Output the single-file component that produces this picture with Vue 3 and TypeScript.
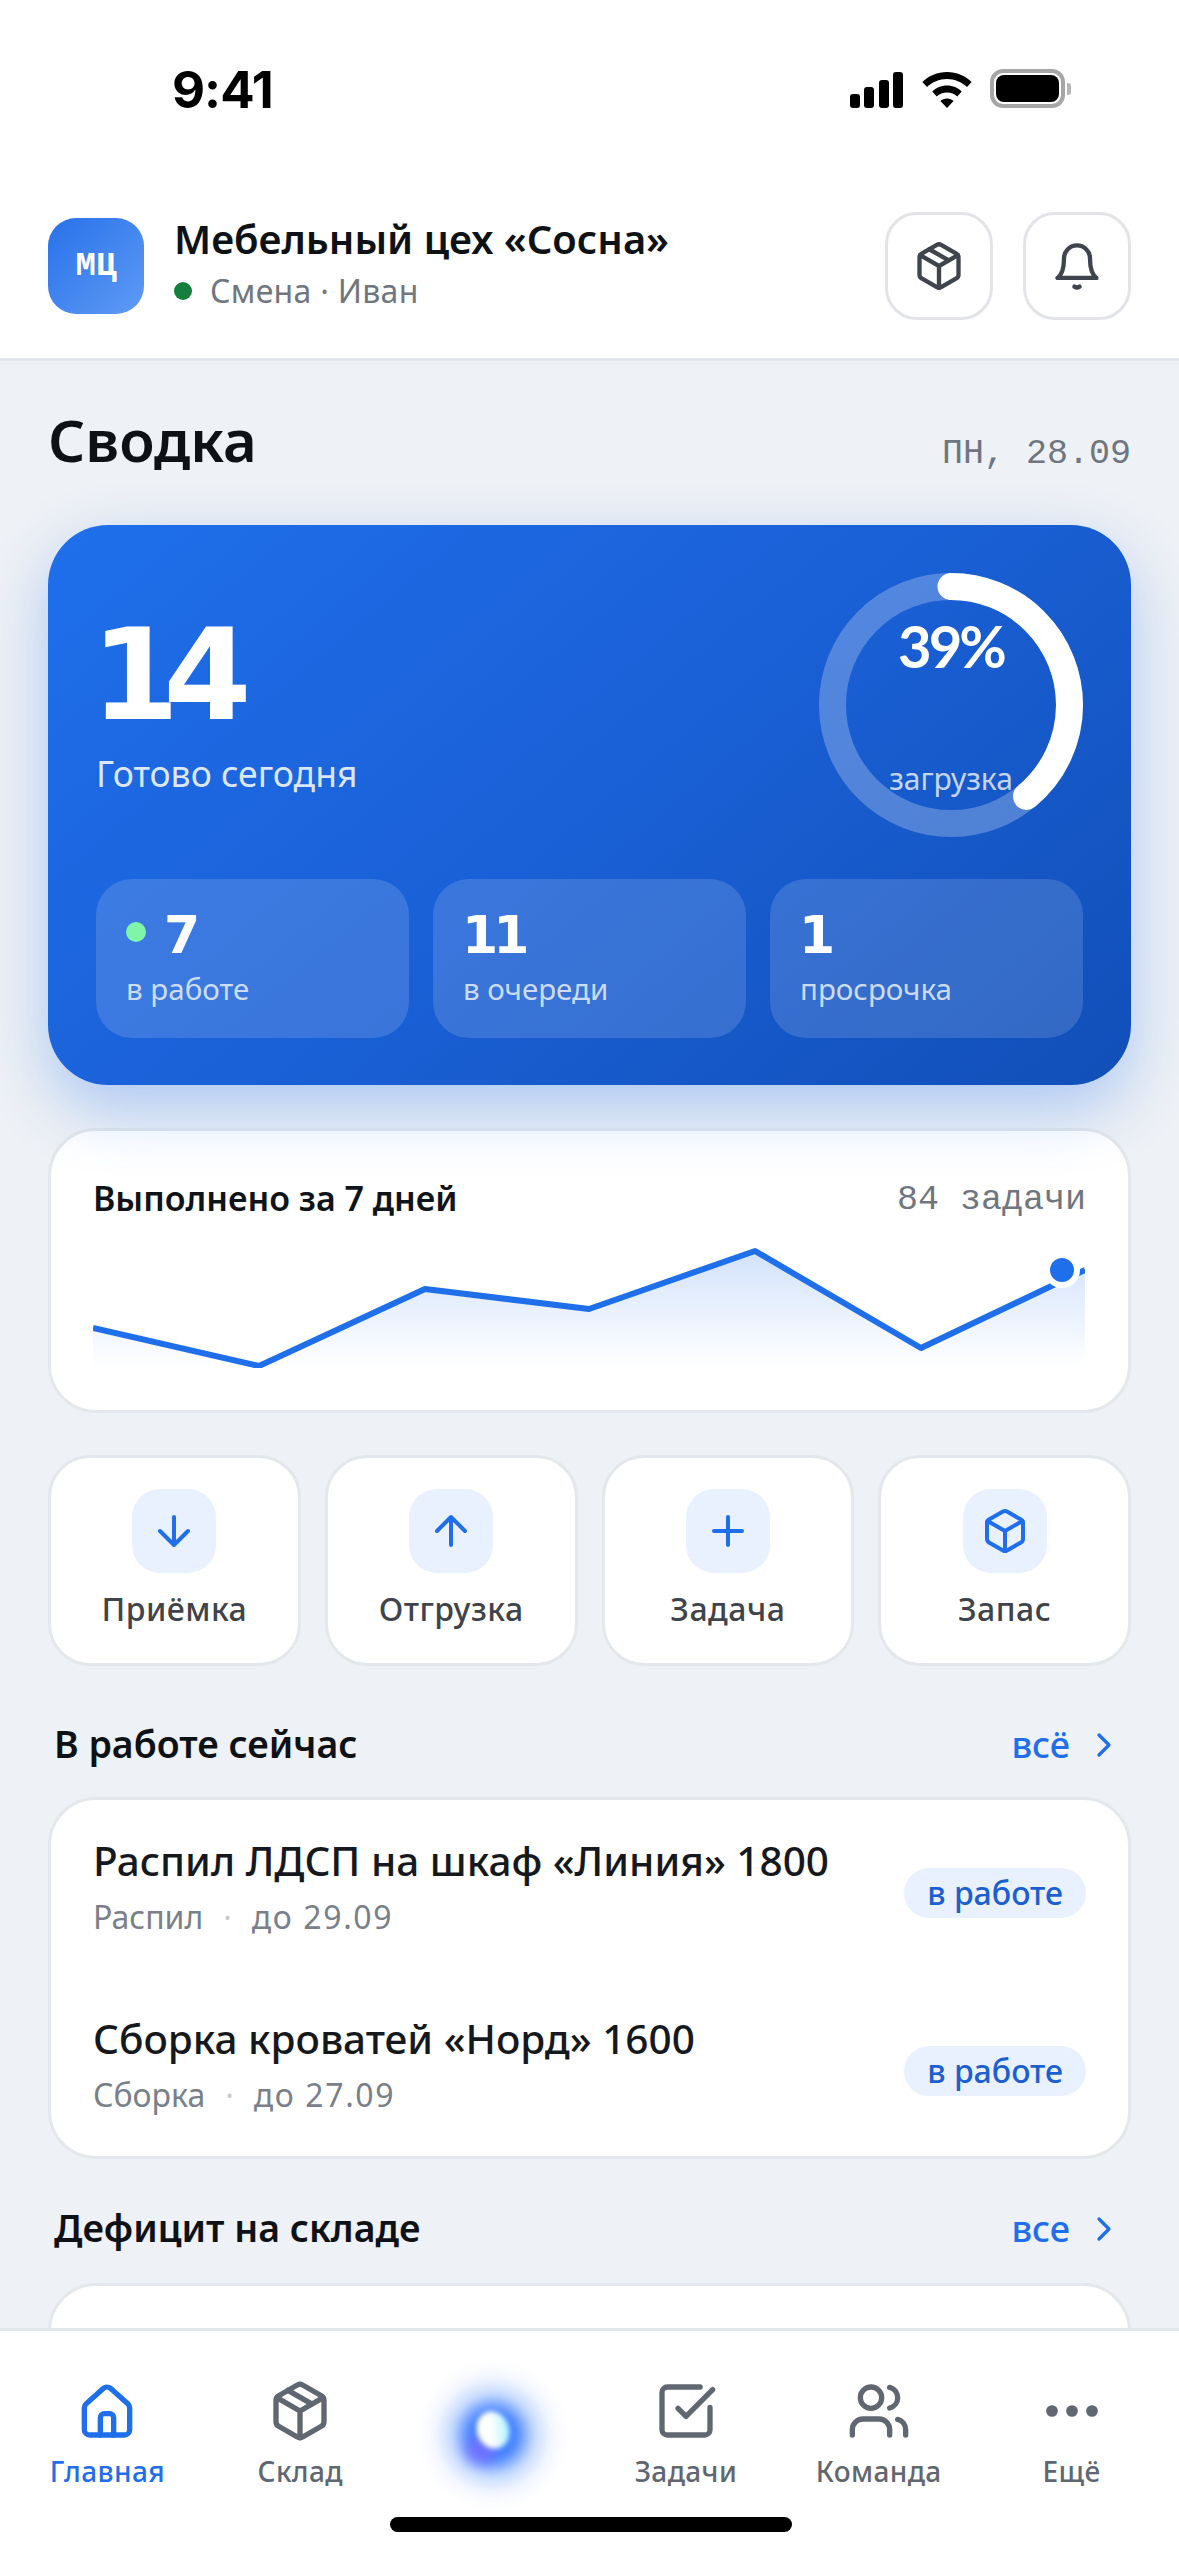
<script setup lang="ts">
interface Stat { value: string; label: string; live?: boolean }
interface Job { title: string; stage: string; due: string }
interface Tab { label: string; icon: string; active?: boolean; orb?: boolean }

const stats: Stat[] = [
  { value: '7', label: 'в работе', live: true },
  { value: '11', label: 'в очереди' },
  { value: '1', label: 'просрочка' },
];

const actions = [
  { label: 'Приёмка', icon: 'down' },
  { label: 'Отгрузка', icon: 'up' },
  { label: 'Задача', icon: 'plus' },
  { label: 'Запас', icon: 'box' },
];

const jobs: Job[] = [
  { title: 'Распил ЛДСП на шкаф «Линия» 1800', stage: 'Распил', due: 'до 29.09' },
  { title: 'Сборка кроватей «Норд» 1600', stage: 'Сборка', due: 'до 27.09' },
];

const tabs: Tab[] = [
  { label: 'Главная', icon: 'home', active: true },
  { label: 'Склад', icon: 'package' },
  { label: '', icon: '', orb: true },
  { label: 'Задачи', icon: 'tasks' },
  { label: 'Команда', icon: 'team' },
  { label: 'Ещё', icon: 'more' },
];

const points = [
  [0, 95], [166, 133], [332, 56], [496, 76], [662, 18], [828, 115], [992, 37],
];
const linePath = points.map(([x, y], i) => `${i ? 'L' : 'M'}${x} ${y}`).join(' ');
const areaPath = `${linePath} L992 135 L0 135 Z`;

// ring geometry: 39% of the circumference
const RING_R = 118.5;
const ringLength = 2 * Math.PI * RING_R;
const ringDash = `${ringLength * 0.39} ${ringLength}`;
</script>

<template>
  <div class="phone">
    <header class="top">
      <div class="status">
        <span class="clock">9:41</span>
        <div class="status-icons">
          <svg width="54" height="36" viewBox="0 0 54 36" fill="#000">
            <rect x="0" y="22" width="10" height="14" rx="3" />
            <rect x="14" y="15" width="10" height="21" rx="3" />
            <rect x="29" y="8" width="10" height="28" rx="3" />
            <rect x="43" y="0" width="10" height="36" rx="3" />
          </svg>
          <svg width="50" height="36" viewBox="0 0 50 36" fill="#000">
            <path d="M25 0c9.6 0 18.2 3.8 24.6 10L45 15C39.8 10 32.8 7 25 7S10.200 10 5 15L.4 10C6.800 3.800 15.400 0 25 0Z" />
            <path d="M25 13.500c5.800 0 11 2.300 14.800 6L35.200 24.500C32.600 22 29 20.500 25 20.500S17.400 22 14.800 24.500L10.200 19.500C14 15.800 19.200 13.500 25 13.500Z" />
            <path d="M25 26.500c2.600 0 4.900 1 6.600 2.600L25 36l-6.600-6.900c1.700-1.600 4-2.600 6.600-2.600Z" />
          </svg>
          <div class="battery"><i class="battery-fill" /><i class="battery-cap" /></div>
        </div>
      </div>
      <div class="brand-row">
        <div class="avatar">МЦ</div>
        <div class="brand">
          <div class="brand-name">Мебельный цех «Сосна»</div>
          <div class="brand-sub"><i class="online" />Смена · Иван</div>
        </div>
        <button class="icon-btn" type="button">
          <svg width="52" height="52" viewBox="0 0 24 24" class="ico">
            <path d="M11 21.730a2 2 0 0 0 2 0l7-4A2 2 0 0 0 21 16V8a2 2 0 0 0-1-1.730l-7-4a2 2 0 0 0-2 0l-7 4A2 2 0 0 0 3 8v8a2 2 0 0 0 1 1.730z" />
            <path d="M12 22V12M3.300 7l8.700 5 8.700-5M7.500 4.270l9 5.150" />
          </svg>
        </button>
        <button class="icon-btn" type="button">
          <svg width="52" height="52" viewBox="0 0 24 24" class="ico">
            <path d="M12 2.500a6 6 0 0 0-6 6c0 5-1 7.500-3 9h18c-2-1.500-3-4-3-9a6 6 0 0 0-6-6Z" />
            <path d="M10.800 21.500q1.200.8 2.400 0" />
          </svg>
        </button>
      </div>
    </header>

    <main class="content">
      <div class="summary-head">
        <h1>Сводка</h1>
        <span class="mono">ПН, 28.09</span>
      </div>

      <section class="hero">
        <div class="hero-top">
          <div class="hero-count">
            <div class="hero-num">14</div>
            <div class="hero-label">Готово сегодня</div>
          </div>
          <div class="ring">
            <svg width="264" height="264" viewBox="0 0 264 264" fill="none">
              <circle cx="132" cy="132" :r="RING_R" stroke="rgba(255,255,255,.25)" stroke-width="27" />
              <circle
                cx="132"
                cy="132"
                :r="RING_R"
                stroke="#fff"
                stroke-width="27"
                stroke-linecap="round"
                :stroke-dasharray="ringDash"
                transform="rotate(-90 132 132)"
              />
            </svg>
            <span class="ring-pct">39%</span>
            <span class="ring-label">загрузка</span>
          </div>
        </div>
        <div class="stats">
          <div v-for="s in stats" :key="s.label" class="stat">
            <div class="stat-value"><i v-if="s.live" class="live" />{{ s.value }}</div>
            <div class="stat-label">{{ s.label }}</div>
          </div>
        </div>
      </section>

      <section class="card chart-card">
        <div class="chart-head">
          <span class="chart-title">Выполнено за 7 дней</span>
          <span class="mono">84 задачи</span>
        </div>
        <svg class="chart" width="992" height="135" viewBox="0 0 992 135" fill="none">
          <defs>
            <linearGradient id="area" x1="0" y1="0" x2="0" y2="1">
              <stop offset="0" stop-color="#1f6feb" stop-opacity=".2" />
              <stop offset="1" stop-color="#1f6feb" stop-opacity="0" />
            </linearGradient>
          </defs>
          <path :d="areaPath" fill="url(#area)" />
          <path :d="linePath" stroke="#1f6feb" stroke-width="6" stroke-linejoin="round" />
          <circle cx="969" cy="37" r="15" fill="#1f6feb" stroke="#fff" stroke-width="6" />
        </svg>
      </section>

      <section class="actions">
        <div v-for="a in actions" :key="a.label" class="card action">
          <div class="action-ico">
            <svg width="48" height="48" viewBox="0 0 24 24" class="ico ico-blue">
              <path v-if="a.icon === 'down'" d="M12 5v14M19 12l-7 7-7-7" />
              <path v-else-if="a.icon === 'up'" d="M12 19V5M5 12l7-7 7 7" />
              <path v-else-if="a.icon === 'plus'" d="M5 12h14M12 5v14" />
              <template v-else>
                <path d="M21 8a2 2 0 0 0-1-1.730l-7-4a2 2 0 0 0-2 0l-7 4A2 2 0 0 0 3 8v8a2 2 0 0 0 1 1.730l7 4a2 2 0 0 0 2 0l7-4A2 2 0 0 0 21 16Z" />
                <path d="M3.300 7l8.700 5 8.700-5M12 22V12" />
              </template>
            </svg>
          </div>
          <span class="action-label">{{ a.label }}</span>
        </div>
      </section>

      <div class="section-head section-head--first">
        <h2>В работе сейчас</h2>
        <a class="more">всё
          <svg width="40" height="40" viewBox="0 0 24 24" class="ico ico-blue"><path d="M9 18l6-6-6-6" /></svg>
        </a>
      </div>
      <section class="card jobs">
        <div v-for="j in jobs" :key="j.title" class="job">
          <div class="job-text">
            <div class="job-title">{{ j.title }}</div>
            <div class="job-sub">{{ j.stage }}<i class="sep">·</i><span class="job-due">{{ j.due }}</span></div>
          </div>
          <span class="pill">в работе</span>
        </div>
      </section>

      <div class="section-head">
        <h2>Дефицит на складе</h2>
        <a class="more">все
          <svg width="40" height="40" viewBox="0 0 24 24" class="ico ico-blue"><path d="M9 18l6-6-6-6" /></svg>
        </a>
      </div>
      <section class="card shortage" />
    </main>

    <nav class="tabs">
      <div v-for="t in tabs" :key="t.label" class="tab" :class="{ active: t.active }">
        <div v-if="t.orb" class="orb"><i class="orb-glow" /><i class="orb-violet" /><i class="orb-core" /></div>
        <template v-else>
          <svg width="64" height="64" viewBox="0 0 24 24" class="ico tab-ico">
            <template v-if="t.icon === 'home'">
              <path d="M3.500 10.800a2 2 0 0 1 .7-1.500l6.500-5.800a2 2 0 0 1 2.600 0l6.500 5.800a2 2 0 0 1 .7 1.500V19a2 2 0 0 1-2 2H5.500a2 2 0 0 1-2-2Z" />
              <path d="M9.500 21v-6.500a1.500 1.500 0 0 1 1.500-1.500h2a1.500 1.500 0 0 1 1.500 1.500V21" />
            </template>
            <template v-else-if="t.icon === 'package'">
              <path d="M11 21.730a2 2 0 0 0 2 0l7-4A2 2 0 0 0 21 16V8a2 2 0 0 0-1-1.730l-7-4a2 2 0 0 0-2 0l-7 4A2 2 0 0 0 3 8v8a2 2 0 0 0 1 1.730z" />
              <path d="M12 22V12M3.300 7l8.700 5 8.700-5M7.500 4.270l9 5.150" />
            </template>
            <template v-else-if="t.icon === 'tasks'">
              <path d="M21 10.700V19a2 2 0 0 1-2 2H5a2 2 0 0 1-2-2V5a2 2 0 0 1 2-2h12.300" />
              <path d="M9 11l3 3L22 4" />
            </template>
            <template v-else-if="t.icon === 'team'">
              <path d="M16 21v-2a4 4 0 0 0-4-4H6a4 4 0 0 0-4 4v2" />
              <circle cx="9" cy="7" r="4" />
              <path d="M22 21v-2a4 4 0 0 0-3-3.870M16 3.130a4 4 0 0 1 0 7.750" />
            </template>
            <template v-else>
              <circle cx="4.500" cy="12" r="1.200" fill="currentColor" />
              <circle cx="12" cy="12" r="1.200" fill="currentColor" />
              <circle cx="19.500" cy="12" r="1.200" fill="currentColor" />
            </template>
          </svg>
          <span class="tab-label">{{ t.label }}</span>
        </template>
      </div>
      <i class="home-bar" />
    </nav>
  </div>
</template>

<style>
html, body { margin: 0; background: #eef1f5; }
</style>

<style scoped>
.phone {
  width: 1179px;
  height: 2556px;
  display: flex;
  flex-direction: column;
  overflow: hidden;
  background: #eef1f5;
  color: #101418;
  font-family: "Noto Sans", Roboto, sans-serif;
}
.top {
  background: #fff;
  border-bottom: 3px solid #e3e6ea;
  flex: none;
}
.status {
  height: 212px;
  box-sizing: border-box;
  padding: 62px 114px 0 172px;
  display: flex;
  justify-content: space-between;
  align-items: flex-start;
}
.clock {
  font: 700 51px/56px Inter, sans-serif;
  letter-spacing: -1px;
  color: #000;
}
.status-icons {
  display: flex;
  align-items: center;
  gap: 18px;
  margin-top: 10px;
}
.battery {
  position: relative;
  width: 75px;
  height: 39px;
  box-sizing: border-box;
  border: 4px solid #a6a6a6;
  border-radius: 13px;
  padding: 2px;
  margin-top: -3px;
}
.battery-fill {
  display: block;
  height: 100%;
  background: #000;
  border-radius: 8px;
}
.battery-cap {
  position: absolute;
  right: -10px;
  top: 10px;
  width: 4px;
  height: 12px;
  background: #b5b5b5;
  border-radius: 0 3px 3px 0;
}
.brand-row {
  display: flex;
  align-items: center;
  padding: 0 48px 38px;
  gap: 30px;
}
.avatar {
  width: 96px;
  height: 96px;
  border-radius: 28px;
  background: linear-gradient(135deg, #2871ea, #5f9bf5);
  color: #fff;
  font: 600 34px/96px "Liberation Mono", monospace;
  text-align: center;
}
.brand {
  flex: 1;
  margin-top: -6px;
}
.brand-name {
  font-size: 40px;
  line-height: 52px;
  font-weight: 600;
  color: #0e1216;
}
.brand-sub {
  display: flex;
  align-items: center;
  margin-top: 4px;
  font-size: 32px;
  line-height: 44px;
  letter-spacing: .3px;
  color: #6f7680;
}
.online {
  width: 18px;
  height: 18px;
  border-radius: 50%;
  background: #15803d;
  margin-right: 18px;
}
.icon-btn {
  width: 108px;
  height: 108px;
  box-sizing: border-box;
  border: 3px solid #e2e4e8;
  border-radius: 32px;
  background: #fff;
  padding: 0;
  display: flex;
  align-items: center;
  justify-content: center;
  color: #40454d;
}
.ico {
  fill: none;
  stroke: currentColor;
  stroke-width: 2;
  stroke-linecap: round;
  stroke-linejoin: round;
  display: block;
}
.ico-blue {
  color: #1f6feb;
}
.content {
  flex: 1;
  min-height: 0;
  overflow: hidden;
  padding: 0 48px;
}
.summary-head {
  height: 164px;
  display: flex;
  justify-content: space-between;
  align-items: center;
}
h1 {
  margin: -8px 0 0;
  font-size: 58px;
  font-weight: 600;
  color: #0e1216;
}
.mono {
  font: 400 35px/44px "Liberation Mono", monospace;
  color: #6f7680;
}
.summary-head .mono {
  margin-top: 22px;
}
.hero {
  position: relative;
  z-index: 1;
  height: 560px;
  box-sizing: border-box;
  padding: 48px 48px 47px;
  border-radius: 60px;
  background: linear-gradient(140deg, #1f6feb 0%, #1a60d6 50%, #114fb8 100%);
  box-shadow: 0 24px 64px rgba(31, 111, 235, .32);
  color: #fff;
  display: flex;
  flex-direction: column;
  justify-content: space-between;
}
.hero-top {
  display: flex;
  justify-content: space-between;
  align-items: center;
}
.hero-num {
  font: 700 127px/130px "DejaVu Sans", sans-serif;
  letter-spacing: -16px;
  margin: -4px 0 0 -5px;
}
.hero-label {
  margin-top: 10px;
  font-size: 35.5px;
  line-height: 46px;
  color: rgba(255, 255, 255, .85);
}
.ring {
  position: relative;
  width: 264px;
  height: 264px;
}
.ring svg {
  display: block;
}
.ring-pct {
  position: absolute;
  left: 0;
  right: 0;
  top: 37px;
  text-align: center;
  font: 700 58px/72px Lato, sans-serif;
  letter-spacing: -3px;
}
.ring-label {
  position: absolute;
  left: 0;
  right: 0;
  top: 186px;
  text-align: center;
  font-size: 30px;
  line-height: 40px;
  color: rgba(255, 255, 255, .75);
}
.stats {
  display: grid;
  grid-template-columns: repeat(3, 1fr);
  gap: 24px;
}
.stat {
  height: 159px;
  box-sizing: border-box;
  padding: 26px 30px;
  border-radius: 36px;
  background: rgba(255, 255, 255, .14);
}
.stat-value {
  display: flex;
  align-items: center;
  margin-left: -1px;
  font: 700 52px/60px "DejaVu Sans", sans-serif;
  letter-spacing: -5px;
}
.live {
  width: 20px;
  height: 20px;
  border-radius: 50%;
  background: #7ef5a8;
  margin: -6px 18px 0 1px;
}
.stat-label {
  margin-top: 4px;
  font-size: 29.5px;
  line-height: 40px;
  color: rgba(255, 255, 255, .75);
}
.card {
  background: #fff;
  border: 3px solid #e4e7eb;
  box-sizing: border-box;
}
.chart-card {
  margin-top: 43px;
  height: 285px;
  border-radius: 48px;
  padding: 43px 42px 0;
}
.chart-head {
  display: flex;
  justify-content: space-between;
  align-items: center;
}
.chart-head .mono {
  margin-top: 4px;
}
.chart-title {
  font-size: 34px;
  line-height: 44px;
  font-weight: 600;
}
.chart {
  display: block;
  margin-top: 11px;
}
.actions {
  margin-top: 42px;
  display: grid;
  grid-template-columns: repeat(4, 1fr);
  gap: 24px;
}
.action {
  height: 211px;
  border-radius: 42px;
  display: flex;
  flex-direction: column;
  align-items: center;
  padding-top: 31px;
}
.action-ico {
  width: 84px;
  height: 84px;
  border-radius: 28px;
  background: #e9f0fe;
  display: flex;
  align-items: center;
  justify-content: center;
}
.action-label {
  margin-top: 14px;
  font-size: 32px;
  line-height: 44px;
  font-weight: 500;
  letter-spacing: .5px;
  color: #3f444c;
}
.section-head {
  display: flex;
  align-items: center;
  justify-content: space-between;
  padding: 0 7px 0 6px;
  margin-top: 43px;
  height: 50px;
  margin-bottom: 31px;
}
.section-head--first {
  margin-top: 52px;
  margin-bottom: 29px;
}
h2 {
  margin: 0;
  font-size: 37.5px;
  font-weight: 600;
  color: #0e1216;
}
.more {
  display: flex;
  align-items: center;
  gap: 14px;
  margin-top: 3px;
  font-size: 36px;
  font-weight: 500;
  color: #1f6feb;
}
.jobs {
  height: 362px;
  border-radius: 48px;
  padding: 0 42px;
  display: flex;
  flex-direction: column;
  justify-content: space-around;
}
.job {
  display: flex;
  align-items: center;
  justify-content: space-between;
}
.job-text {
  margin-top: -5px;
}
.job-title {
  font-size: 40.5px;
  line-height: 54px;
  font-weight: 500;
  color: #15191e;
}
.job-sub {
  margin-top: 7px;
  font-size: 32px;
  line-height: 44px;
  color: #7a808a;
}
.job-due {
  letter-spacing: 1.6px;
}
.sep {
  font-style: normal;
  color: #c9ccd1;
  margin: 0 20px;
}
.pill {
  height: 50px;
  margin-top: 8px;
  padding: 0 23px;
  border-radius: 25px;
  background: #e9f0fe;
  color: #1c5fd0;
  font-size: 32px;
  line-height: 50px;
  font-weight: 500;
  white-space: nowrap;
}
.shortage {
  height: 160px;
  border-radius: 48px;
}
.tabs {
  position: relative;
  flex: none;
  height: 228px;
  box-sizing: border-box;
  background: #fff;
  border-top: 3px solid #e3e6ea;
  padding: 48px 11px 0;
  display: grid;
  grid-template-columns: repeat(6, 1fr);
  align-items: start;
}
.tab {
  display: flex;
  flex-direction: column;
  align-items: center;
  color: #616771;
}
.tab.active {
  color: #1f6feb;
}
.tab-label {
  margin-top: 8px;
  font-size: 28px;
  line-height: 40px;
  font-weight: 500;
  letter-spacing: .4px;
}
.orb {
  position: relative;
  width: 160px;
  height: 160px;
  margin-top: -24px;
}
.orb i {
  position: absolute;
  display: block;
  border-radius: 50%;
}
.orb-glow {
  left: 5px;
  top: 5px;
  width: 150px;
  height: 150px;
  background: radial-gradient(closest-side, #3f82ff 0%, rgba(60, 125, 255, .95) 30%, rgba(100, 155, 255, .36) 55%, rgba(150, 180, 255, .1) 78%, rgba(255, 255, 255, 0) 100%);
  filter: blur(3px);
}
.orb-violet {
  left: 54px;
  top: 82px;
  width: 28px;
  height: 26px;
  background: #7b6bff;
  opacity: .85;
  filter: blur(7px);
}
.orb-core {
  left: 64px;
  top: 56px;
  width: 32px;
  height: 38px;
  border-radius: 40% 60% 60% 40%;
  background: linear-gradient(105deg, #fff 45%, #9ff2ff 100%);
  transform: rotate(-20deg);
  filter: blur(2.500px);
}
.home-bar {
  position: absolute;
  left: 390px;
  bottom: 24px;
  width: 402px;
  height: 15px;
  border-radius: 8px;
  background: #000;
}
</style>
